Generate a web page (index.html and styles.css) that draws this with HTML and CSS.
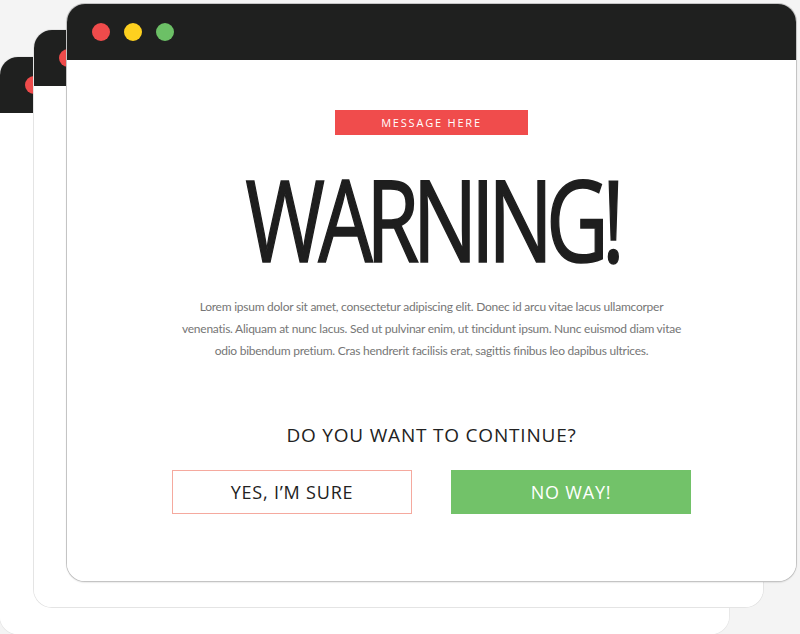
FILE: index.html
```html
<!DOCTYPE html>
<html lang="en">
<head>
    <meta charset="UTF-8">
    <meta name="viewport" content="width=device-width, initial-scale=1.0">
    <title>Warning</title>
    <link rel="stylesheet" href="styles.css">
</head>
<body>

    <div class="desk">
        <!-- Finestres de fons -->
        <div class="window back">
            <div class="titlebar">
                <span class="dot red"></span>
                <span class="dot yellow"></span>
                <span class="dot green"></span>
            </div>
            <div class="window-body"></div>
        </div>

        <div class="window middle">
            <div class="titlebar">
                <span class="dot red"></span>
                <span class="dot yellow"></span>
                <span class="dot green"></span>
            </div>
            <div class="window-body"></div>
        </div>

        <!-- Finestra principal -->
        <div class="window front">
            <div class="titlebar">
                <span class="dot red"></span>
                <span class="dot yellow"></span>
                <span class="dot green"></span>
            </div>
            <div class="window-body content">
                <div class="badge">MESSAGE HERE</div>
                <h1 class="title">WARNING!</h1>
                <p class="text">
                    Lorem ipsum dolor sit amet, consectetur adipiscing elit. Donec id arcu vitae lacus ullamcorper<br>
                    venenatis. Aliquam at nunc lacus. Sed ut pulvinar enim, ut tincidunt ipsum. Nunc euismod diam vitae<br>
                    odio bibendum pretium. Cras hendrerit facilisis erat, sagittis finibus leo dapibus ultrices.
                </p>
                <h3 class="question">DO YOU WANT TO CONTINUE?</h3>
                <div class="actions">
                    <button class="btn btn-yes">YES, I’M SURE</button>
                    <button class="btn btn-no">NO WAY!</button>
                </div>
            </div>
        </div>
    </div>

</body>
</html>
```

FILE: styles.css
```css
body {
    margin: 0;
    font-family: "Open Sans", "Liberation Sans", sans-serif;
    background-color: #f4f4f4;
}
.desk {
    position: relative;
    width: 800px;
    height: 634px;
    overflow: hidden;
    background-color: #f4f4f4;
}
.window {
    position: absolute;
    width: 729px;
    height: 577px;
    display: flex;
    flex-direction: column;
    border-radius: 18px;
    overflow: hidden;
    background-color: white;
}
.back {
    left: 0;
    top: 57px;
    box-shadow: 0 0 0 1px #e8e8e8;
}
.middle {
    left: 34px;
    top: 30px;
    box-shadow: 0 0 0 1px #e4e4e4;
}
.front {
    left: 67px;
    top: 4px;
    box-shadow: 0 0 0 1px #c4c4c4, 0 1px 2px rgba(0, 0, 0, 0.25);
}
.titlebar {
    height: 56px;
    background-color: #1f201f;
    display: flex;
    align-items: center;
    gap: 14px;
    padding-left: 25px;
    flex-shrink: 0;
}
.dot {
    width: 18px;
    height: 18px;
    border-radius: 50%;
}
.red {
    background-color: #ef4b4b;
}
.yellow {
    background-color: #fdd01f;
}
.green {
    background-color: #6cc066;
}
.window-body {
    flex: 1;
    background-color: white;
}
.content {
    display: flex;
    flex-direction: column;
    align-items: center;
    padding-top: 50px;
}
.badge {
    width: 193px;
    height: 25px;
    line-height: 25px;
    background-color: #f04c4c;
    color: white;
    font-size: 11px;
    letter-spacing: 1.8px;
    text-align: center;
}
.title {
    margin: 33px 0 0 0;
    font-size: 113px;
    font-weight: 400;
    line-height: 100px;
    letter-spacing: -9px;
    color: #1e1e1e;
    -webkit-text-stroke: 1.6px #1e1e1e;
    transform: scaleX(0.765);
}
.text {
    margin: 28px 0 0 0;
    font-family: Lato, "Open Sans", sans-serif;
    font-size: 12px;
    line-height: 22px;
    color: #767676;
    text-align: center;
    letter-spacing: -0.25px;
}
.question {
    margin: 60px 0 0 0;
    font-size: 19px;
    font-weight: 400;
    letter-spacing: 0.8px;
    color: #222;
}
.actions {
    display: flex;
    gap: 39px;
    margin-top: 22px;
}
.btn {
    width: 240px;
    height: 44px;
    font-family: "Open Sans", sans-serif;
    font-size: 18px;
    letter-spacing: 0.8px;
    cursor: pointer;
}
.btn-yes {
    background-color: white;
    border: 1px solid #f5a99e;
    color: #222;
}
.btn-no {
    background-color: #72c269;
    border: none;
    color: white;
}
```
